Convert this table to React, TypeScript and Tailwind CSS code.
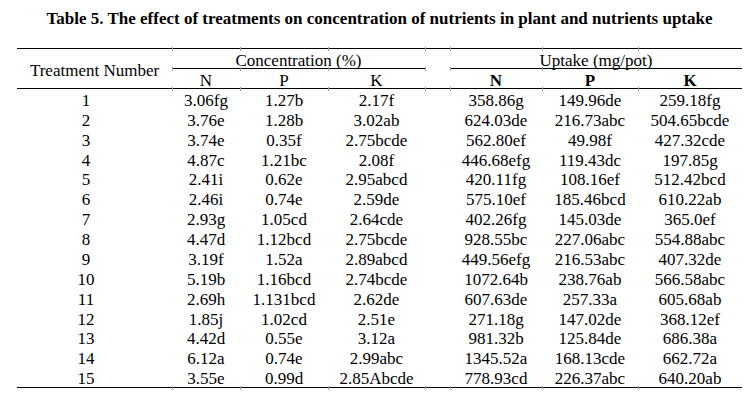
import React from "react";

const rows: string[][] = [
  ["1", "3.06fg", "1.27b", "2.17f", "358.86g", "149.96de", "259.18fg"],
  ["2", "3.76e", "1.28b", "3.02ab", "624.03de", "216.73abc", "504.65bcde"],
  ["3", "3.74e", "0.35f", "2.75bcde", "562.80ef", "49.98f", "427.32cde"],
  ["4", "4.87c", "1.21bc", "2.08f", "446.68efg", "119.43dc", "197.85g"],
  ["5", "2.41i", "0.62e", "2.95abcd", "420.11fg", "108.16ef", "512.42bcd"],
  ["6", "2.46i", "0.74e", "2.59de", "575.10ef", "185.46bcd", "610.22ab"],
  ["7", "2.93g", "1.05cd", "2.64cde", "402.26fg", "145.03de", "365.0ef"],
  ["8", "4.47d", "1.12bcd", "2.75bcde", "928.55bc", "227.06abc", "554.88abc"],
  ["9", "3.19f", "1.52a", "2.89abcd", "449.56efg", "216.53abc", "407.32de"],
  ["10", "5.19b", "1.16bcd", "2.74bcde", "1072.64b", "238.76ab", "566.58abc"],
  ["11", "2.69h", "1.131bcd", "2.62de", "607.63de", "257.33a", "605.68ab"],
  ["12", "1.85j", "1.02cd", "2.51e", "271.18g", "147.02de", "368.12ef"],
  ["13", "4.42d", "0.55e", "3.12a", "981.32b", "125.84de", "686.38a"],
  ["14", "6.12a", "0.74e", "2.99abc", "1345.52a", "168.13cde", "662.72a"],
  ["15", "3.55e", "0.99d", "2.85Abcde", "778.93cd", "226.37abc", "640.20ab"],
];

const cols = "grid grid-cols-[155px_68px_88px_97px_25px_92px_96px_104px]";

const tickXs = [155, 223, 311, 408, 433, 525, 621];
const tickYs = [-1, 19, 39, 338];

export default function App() {
  return (
    <div
      className="w-[751px] h-[412px] overflow-hidden bg-white text-black text-[17px]"
      style={{ fontFamily: '"Liberation Serif", "Times New Roman", serif' }}
    >
      <div className="h-[48px] pt-[7px] pl-[17px] w-[742px] text-center font-bold leading-[23px] whitespace-nowrap">
        Table 5. The effect of treatments on concentration of nutrients in plant and nutrients uptake
      </div>
      <div className="relative ml-[17px] w-[725px] border-t border-b border-black">
        <div className={`${cols} grid-rows-[20px_19px] border-b border-black`}>
          <div className="row-span-2 pt-[10px] text-center leading-[23px] whitespace-nowrap">
            Treatment Number
          </div>
          <div className="col-span-3 h-[20px] border-b border-black text-center leading-[23px]">
            Concentration (%)
          </div>
          <div className="row-span-2" />
          <div className="col-span-3 h-[20px] border-b border-black text-center leading-[23px]">
            Uptake (mg/pot)
          </div>
          <div className="h-[19px] text-center leading-[23px]">N</div>
          <div className="h-[19px] text-center leading-[23px]">P</div>
          <div className="h-[19px] text-center leading-[23px]">K</div>
          <div className="h-[19px] text-center leading-[23px] font-bold">N</div>
          <div className="h-[19px] text-center leading-[23px] font-bold">P</div>
          <div className="h-[19px] text-center leading-[23px] font-bold">K</div>
        </div>
        <div className="h-[298px] grid grid-rows-[repeat(15,minmax(0,1fr))]">
          {rows.map((r) => (
            <div
              key={r[0]}
              className={`${cols} grid-rows-[minmax(0,1fr)] min-h-0 leading-[23px] whitespace-nowrap`}
            >
              <div className="text-center pr-[17px]">{r[0]}</div>
              <div className="text-center">{r[1]}</div>
              <div className="text-center">{r[2]}</div>
              <div className="text-center">{r[3]}</div>
              <div />
              <div className="text-center">{r[4]}</div>
              <div className="text-center">{r[5]}</div>
              <div className="text-center">{r[6]}</div>
            </div>
          ))}
        </div>
        {tickYs.map((y) =>
          tickXs.map((x) => (
            <span
              key={`${x}-${y}`}
              className="absolute w-px h-[4px] bg-[#a0a0a0]"
              style={{ left: x, top: y - 1 }}
            />
          ))
        )}
      </div>
    </div>
  );
}
